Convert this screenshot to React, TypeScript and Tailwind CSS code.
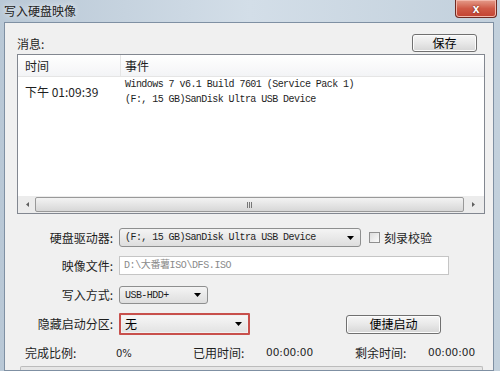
import { ReactNode } from 'react';

const cjk = "font-['Microsoft_YaHei','Noto_Sans_CJK_SC',sans-serif]";
const mono = "font-['Liberation_Mono','Noto_Sans_CJK_SC',monospace]";

function Arrow() {
    return (
        <svg width="7" height="4" viewBox="0 0 7 4" className="shrink-0">
            <path d="M0 0h7L3.5 4z" fill="#000" />
        </svg>
    );
}

function WinButton({ children, className }: { children: ReactNode; className: string }) {
    return (
        <div
            className={`flex items-center justify-center rounded-[3px] border border-[#707070] bg-gradient-to-b from-[#f6f6f6] via-[#e8e8e8] to-[#d6d6d6] text-[12px] text-black shadow-[inset_0_0_0_1px_#fcfcfc] ${className}`}
        >
            {children}
        </div>
    );
}

function Combo({ children, className }: { children: ReactNode; className: string }) {
    return (
        <div
            className={`flex items-center justify-between rounded-[3px] border border-[#8e8f8f] bg-gradient-to-b from-[#f4f4f4] to-[#dedede] pl-[5px] pr-[6px] ${className}`}
        >
            {children}
            <Arrow />
        </div>
    );
}

function Label({ children }: { children: ReactNode }) {
    return <div className="w-[96px] shrink-0 text-right text-[12px] text-[#1e1e1e]">{children}</div>;
}

export default function App() {
    return (
        <div className={`flex h-[371px] w-[500px] flex-col overflow-hidden bg-gradient-to-r from-[#b9c8d6] via-[#d3dee8] to-[#c2d0dc] ${cjk}`}>
            {/* Title bar */}
            <div className="flex h-[22px] shrink-0 items-start justify-between">
                <div className="pl-[4px] pt-[4px] text-[12px] leading-[14px] text-[#222] [text-shadow:0_0_6px_#fff]">
                    写入硬盘映像
                </div>
                <div className="mr-[3px] flex h-[18px] w-[42px] items-center justify-center rounded-b-[4px] border border-t-0 border-[#6e2a22] bg-gradient-to-b from-[#e49b8a] via-[#cf5a47] to-[#c24130] shadow-[inset_0_0_0_1px_#f2b7aa]">
                    <span className="font-['Liberation_Sans',sans-serif] text-[12px] font-bold leading-none text-white [text-shadow:0_0_2px_#5a1a12]">
                        x
                    </span>
                </div>
            </div>

            {/* Client area */}
            <div className="ml-[4px] mr-[6px] flex-1 border border-[#7f90a3] bg-[#f0f0f0] pl-[12px] pr-[8px]">
                <div className="mt-[11px] flex h-[18px] items-end justify-between">
                    <span className="mb-[-1px] text-[12px] text-[#1e1e1e]">消息:</span>
                    <WinButton className="mr-[8px] h-[18px] w-[65px]">保存</WinButton>
                </div>

                {/* Message list */}
                <div className="mt-[2px] flex h-[160px] flex-col border border-[#828790] bg-white">
                    <div className="flex h-[22px] shrink-0 border-b border-[#e5e5e5] bg-gradient-to-b from-white to-[#f3f4f6] text-[12px] text-[#1e1e1e]">
                        <div className="flex w-[103px] items-center border-r border-[#e5e5e5] pl-[7px]">时间</div>
                        <div className="flex items-center pl-[4px]">事件</div>
                    </div>
                    <div className="flex-1">
                        <div className="flex items-center">
                            <div className="w-[103px] pl-[7px] text-[12px] text-[#1e1e1e]">下午 01:09:39</div>
                            <div className={`pl-[4px] text-[10px] leading-[15px] tracking-[-0.55px] text-[#1e1e1e] ${mono}`}>
                                <div>Windows 7 v6.1 Build 7601 (Service Pack 1)</div>
                                <div>(F:, 15 GB)SanDisk Ultra USB Device</div>
                            </div>
                        </div>
                    </div>
                    {/* Horizontal scrollbar */}
                    <div className="flex h-[17px] shrink-0 items-center bg-[#ececec] px-[1px]">
                        <div className="flex w-[16px] items-center justify-center">
                            <svg width="3" height="5" viewBox="0 0 3 5">
                                <path d="M3 0v5L0 2.5z" fill="#606060" />
                            </svg>
                        </div>
                        <div className="flex h-[15px] flex-1 items-center justify-center rounded-[2px] border border-[#999] bg-gradient-to-b from-[#f3f3f3] to-[#d7d7d7]">
                            <div className="flex gap-[1px]">
                                <div className="h-[6px] w-[1px] bg-[#777]" />
                                <div className="h-[6px] w-[1px] bg-[#777]" />
                                <div className="h-[6px] w-[1px] bg-[#777]" />
                            </div>
                        </div>
                        <div className="flex w-[19px] items-center justify-center">
                            <svg width="3" height="5" viewBox="0 0 3 5">
                                <path d="M0 0v5L3 2.5z" fill="#606060" />
                            </svg>
                        </div>
                    </div>
                </div>

                {/* Form */}
                <div className="mt-[14px] flex h-[19px] items-center gap-[6px]">
                    <Label>硬盘驱动器:</Label>
                    <Combo className="h-[19px] w-[242px]">
                        <span className={`text-[10px] tracking-[-0.55px] text-[#1e1e1e] ${mono}`}>(F:, 15 GB)SanDisk Ultra USB Device</span>
                    </Combo>
                    <div className="ml-[2px] flex items-center gap-[4px]">
                        <div className="h-[11px] w-[11px] border border-[#8f8f8f] bg-gradient-to-br from-[#dcdcdc] to-[#fbfbfb]" />
                        <span className="text-[12px] text-[#1e1e1e]">刻录校验</span>
                    </div>
                </div>

                <div className="mt-[9px] flex h-[19px] items-center gap-[6px]">
                    <Label>映像文件:</Label>
                    <div className="flex h-[19px] w-[330px] items-center border border-[#c5c5c5] bg-white pl-[4px]">
                        <span className={`text-[10px] tracking-[-0.4px] text-[#8a8a8a] ${mono}`}>D:\大番薯ISO\DFS.ISO</span>
                    </div>
                </div>

                <div className="mt-[11px] flex h-[18px] items-center gap-[6px]">
                    <Label>写入方式:</Label>
                    <Combo className="h-[18px] w-[89px]">
                        <span className={`text-[10px] tracking-[-0.55px] text-[#1e1e1e] ${mono}`}>USB-HDD+</span>
                    </Combo>
                </div>

                <div className="mt-[10px] flex h-[20px] items-center gap-[6px]">
                    <Label>隐藏启动分区:</Label>
                    <div className="rounded-[1px] border-[2px] border-[#c8504c] p-[1px]">
                        <div className="flex h-[16px] w-[125px] items-center justify-between bg-gradient-to-b from-[#f6f6f6] to-[#e3e3e3] pl-[3px] pr-[5px]">
                            <span className="text-[12px] text-black">无</span>
                            <Arrow />
                        </div>
                    </div>
                    <WinButton className="ml-[90px] h-[19px] w-[95px]">便捷启动</WinButton>
                </div>

                {/* Status row */}
                <div className="mt-[10px] flex items-center pl-[8px] text-[#1e1e1e]">
                    <span className="w-[91px] text-[12px]">完成比例:</span>
                    <span className="w-[77px] font-['DejaVu_Sans',sans-serif] text-[10px]">0%</span>
                    <span className="w-[73px] text-[12px]">已用时间:</span>
                    <span className="w-[89px] font-['DejaVu_Sans',sans-serif] text-[10.5px]">00:00:00</span>
                    <span className="w-[73px] text-[12px]">剩余时间:</span>
                    <span className="font-['DejaVu_Sans',sans-serif] text-[10.5px]">00:00:00</span>
                </div>
                <div className="ml-[3px] mt-[4px] h-[4px] w-[463px] rounded-t-[2px] border border-b-0 border-[#bcbcbc] bg-[#e6e6e6]" />
            </div>
        </div>
    );
}
